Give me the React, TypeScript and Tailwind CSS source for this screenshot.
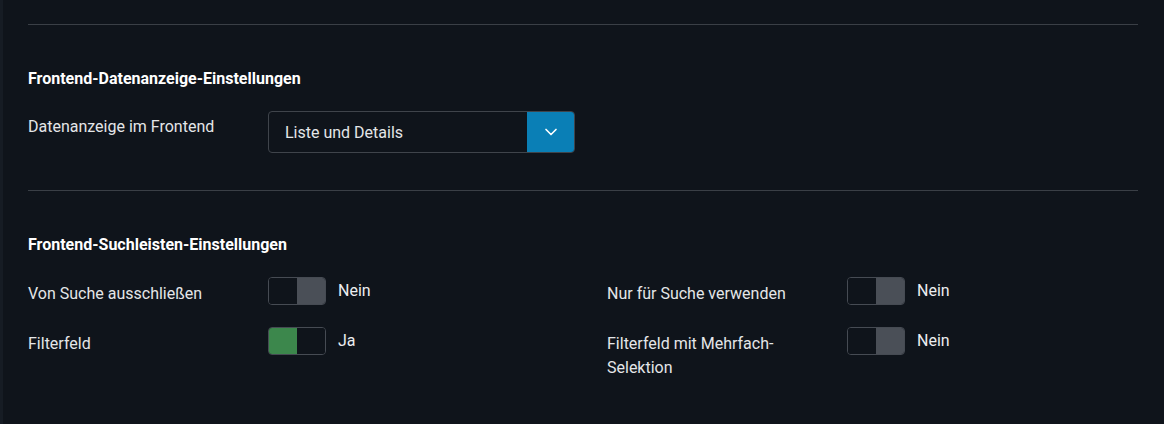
import React from "react";

type Toggle = { label: string; on: boolean };

const searchLeft: Toggle[] = [
	{ label: "Von Suche ausschließen", on: false },
	{ label: "Filterfeld", on: true },
];

const searchRight: Toggle[] = [
	{ label: "Nur für Suche verwenden", on: false },
	{ label: "Filterfeld mit Mehrfach-Selektion", on: false },
];

function Switch({ on }: { on: boolean }) {
	return (
		<div className="flex items-center gap-3">
			<div className="flex h-[28px] w-[58px] shrink-0 overflow-hidden rounded-[4px] border border-[#464b53]">
				<div className={on ? "w-1/2 bg-[#3c874c]" : "w-1/2 bg-[#0f141b]"} />
				<div className={on ? "w-1/2 bg-[#0f141b]" : "w-1/2 bg-[#4a4f57]"} />
			</div>
			<span className="text-[16px] leading-[24px] text-[#eceef0] -mt-[1px]">
				{on ? "Ja" : "Nein"}
			</span>
		</div>
	);
}

function ToggleRow({ item }: { item: Toggle }) {
	return (
		<div className="flex items-start">
			<div className="w-[240px] shrink-0 pr-4 pt-[5px] text-[16px] leading-[24px] text-[#e4e6e8]">
				{item.label}
			</div>
			<Switch on={item.on} />
		</div>
	);
}

export default function App() {
	return (
		<div
			className="min-h-[424px] w-full border-l-[3px] border-[#161c24] bg-[#0f141b] pl-[25px] pr-[26px]"
			style={{ fontFamily: "Roboto, 'Noto Sans', sans-serif" }}
		>
			<div className="h-[24px]" />
			<div className="border-t border-[#3a3f46]" />

			<h2 className="mt-[44px] text-[16px] font-bold leading-[20px] text-white">
				Frontend-Datenanzeige-Einstellungen
			</h2>
			<div className="mt-[22px] flex items-start">
				<div className="w-[240px] shrink-0 pt-[4px] text-[16px] leading-[24px] text-[#e4e6e8]">
					Datenanzeige im Frontend
				</div>
				<div className="flex h-[42px] w-[307px] overflow-hidden rounded-[4px] border border-[#3f444b]">
					<div className="flex flex-1 items-center pl-4 pt-[2px] text-[16px] text-[#e4e6e8]">
						Liste und Details
					</div>
					<div className="flex w-[47px] items-center justify-center bg-[#0a7fb6] pl-[1px]">
						<svg width="20" height="20" viewBox="0 0 24 24" fill="none" stroke="white" strokeWidth="2" strokeLinecap="round" strokeLinejoin="round">
							<path d="M6 9l6 6 6-6" />
						</svg>
					</div>
				</div>
			</div>

			<div className="mt-[37px] border-t border-[#3a3f46]" />

			<h2 className="mt-[44px] text-[16px] font-bold leading-[20px] text-white">
				Frontend-Suchleisten-Einstellungen
			</h2>
			<div className="mt-[22px] grid grid-cols-[579px_1fr]">
				<div className="flex flex-col gap-[21px]">
					{searchLeft.map((item, index) => (
						<ToggleRow key={index} item={item} />
					))}
				</div>
				<div className="flex flex-col gap-[21px]">
					{searchRight.map((item, index) => (
						<ToggleRow key={index} item={item} />
					))}
				</div>
			</div>
		</div>
	);
}
